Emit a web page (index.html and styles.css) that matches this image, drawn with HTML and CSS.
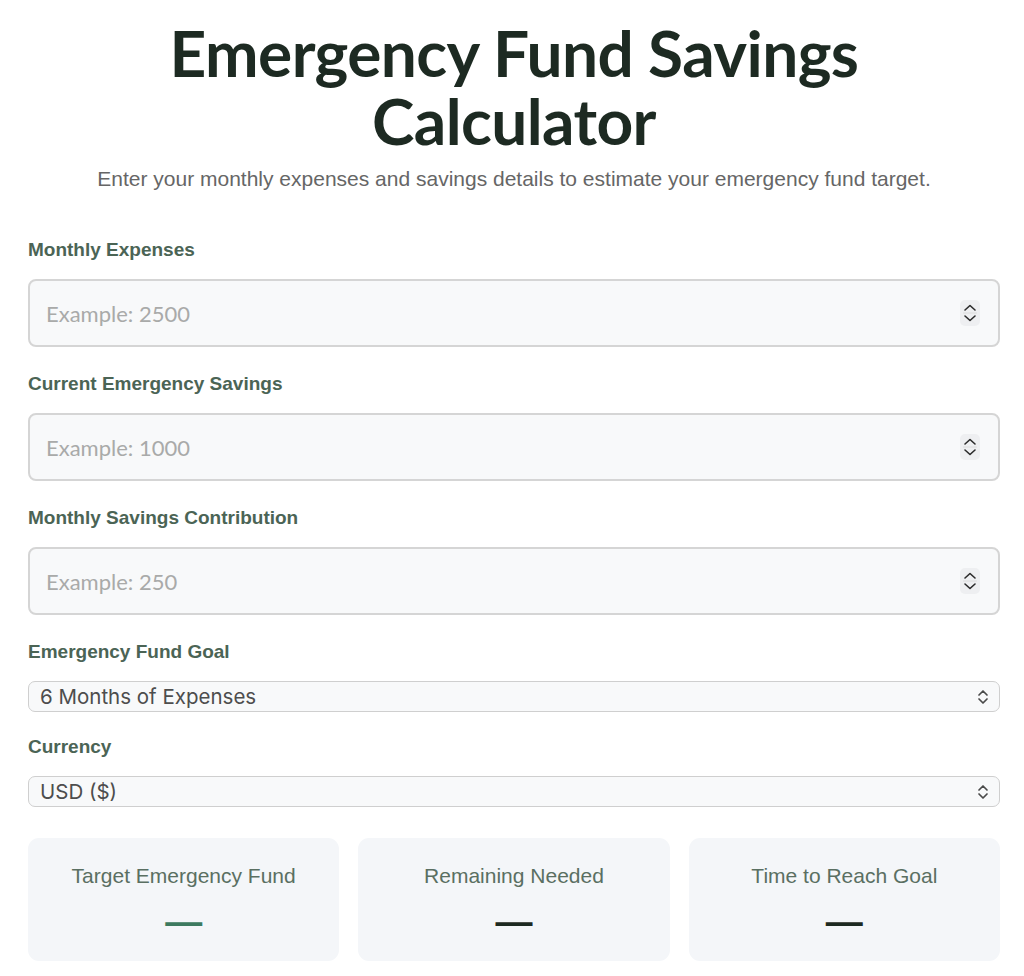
FILE: index.html
```html
<!DOCTYPE html>
<html lang="en">
<head>
    <meta charset="UTF-8">
    <meta name="viewport" content="width=device-width, initial-scale=1.0">
    <title>Emergency Fund Savings Calculator</title>
    <link rel="stylesheet" href="styles.css">
</head>
<body>
    <div class="calculator">
        <h1 class="title">Emergency Fund Savings Calculator</h1>
        <p class="subtitle">Enter your monthly expenses and savings details to estimate your emergency fund target.</p>

        <div class="field">
            <label class="field-label" for="expenses">Monthly Expenses</label>
            <div class="number-box">
                <input class="number-input" type="text" id="expenses" placeholder="Example: 2500">
                <span class="stepper">
                    <svg width="20" height="26" viewBox="0 0 20 26"><path d="M5 10l5-4.5 5 4.5M5 16l5 4.5 5-4.5" fill="none" stroke="#2b2b2b" stroke-width="1.6" stroke-linecap="round" stroke-linejoin="round"/><path d="M3 13h14" stroke="#dcdcdc" stroke-width="1"/></svg>
                </span>
            </div>
        </div>

        <div class="field">
            <label class="field-label" for="savings">Current Emergency Savings</label>
            <div class="number-box">
                <input class="number-input" type="text" id="savings" placeholder="Example: 1000">
                <span class="stepper">
                    <svg width="20" height="26" viewBox="0 0 20 26"><path d="M5 10l5-4.5 5 4.5M5 16l5 4.5 5-4.5" fill="none" stroke="#2b2b2b" stroke-width="1.6" stroke-linecap="round" stroke-linejoin="round"/><path d="M3 13h14" stroke="#dcdcdc" stroke-width="1"/></svg>
                </span>
            </div>
        </div>

        <div class="field">
            <label class="field-label" for="contribution">Monthly Savings Contribution</label>
            <div class="number-box">
                <input class="number-input" type="text" id="contribution" placeholder="Example: 250">
                <span class="stepper">
                    <svg width="20" height="26" viewBox="0 0 20 26"><path d="M5 10l5-4.5 5 4.5M5 16l5 4.5 5-4.5" fill="none" stroke="#2b2b2b" stroke-width="1.6" stroke-linecap="round" stroke-linejoin="round"/><path d="M3 13h14" stroke="#dcdcdc" stroke-width="1"/></svg>
                </span>
            </div>
        </div>

        <div class="field field-select">
            <label class="field-label" for="goal">Emergency Fund Goal</label>
            <div class="select-box">
                <select class="select-input" id="goal">
                    <option>3 Months of Expenses</option>
                    <option selected>6 Months of Expenses</option>
                    <option>9 Months of Expenses</option>
                    <option>12 Months of Expenses</option>
                </select>
                <svg class="select-arrows" width="12" height="20" viewBox="0 0 12 20"><path d="M2 8l4-4 4 4M2 12l4 4 4-4" fill="none" stroke="#4a4a4a" stroke-width="1.7" stroke-linecap="round" stroke-linejoin="round"/></svg>
            </div>
        </div>

        <div class="field field-select">
            <label class="field-label" for="currency">Currency</label>
            <div class="select-box">
                <select class="select-input" id="currency">
                    <option selected>USD ($)</option>
                    <option>EUR (€)</option>
                    <option>GBP (£)</option>
                </select>
                <svg class="select-arrows" width="12" height="20" viewBox="0 0 12 20"><path d="M2 8l4-4 4 4M2 12l4 4 4-4" fill="none" stroke="#4a4a4a" stroke-width="1.7" stroke-linecap="round" stroke-linejoin="round"/></svg>
            </div>
        </div>

        <div class="results">
            <div class="result-card">
                <div class="result-label">Target Emergency Fund</div>
                <div class="result-value result-value-main">—</div>
            </div>
            <div class="result-card">
                <div class="result-label">Remaining Needed</div>
                <div class="result-value">—</div>
            </div>
            <div class="result-card">
                <div class="result-label">Time to Reach Goal</div>
                <div class="result-value">—</div>
            </div>
        </div>
    </div>
</body>
</html>
```

FILE: styles.css
```css
body {
    margin: 0;
    font-family: "Liberation Sans", Arial, sans-serif;
    background: #ffffff;
    color: #1d2a22;
}

.calculator {
    padding: 19px 24px 16px 28px;
}

.title {
    font-family: Lato, "Liberation Sans", sans-serif;
    font-weight: 700;
    font-size: 64px;
    line-height: 68px;
    letter-spacing: -0.6px;
    text-align: center;
    color: #1d2a22;
    margin: 0;
}

.subtitle {
    font-size: 21px;
    line-height: 24px;
    color: #666666;
    text-align: center;
    margin: 12px 0 48px;
}

.field {
    margin-bottom: 26px;
}

.field-label {
    display: block;
    font-size: 19px;
    line-height: 22px;
    font-weight: 700;
    color: #4b6455;
    margin-bottom: 18px;
}

/* number fields: text input plus a stepper in one bordered box */
.number-box {
    display: flex;
    align-items: center;
    height: 68px;
    box-sizing: border-box;
    border: 2px solid #d5d5d5;
    border-radius: 8px;
    background: #f8f9fa;
    padding: 0 18px 0 16px;
}

.number-input {
    flex: 1;
    border: none;
    outline: none;
    background: transparent;
    font-family: Lato, "Liberation Sans", sans-serif;
    font-size: 22px;
    color: #333333;
    padding: 0;
}

.number-input::placeholder {
    color: #a9aaa9;
}

.stepper {
    display: flex;
    width: 20px;
    height: 26px;
    border-radius: 5px;
    background: #eeeff1;
}

.field-select {
    margin-bottom: 24px;
}

.select-box {
    display: flex;
    align-items: center;
    height: 31px;
    box-sizing: border-box;
    border: 1.5px solid #cfcfcf;
    border-radius: 7px;
    background: #f8f9fa;
    padding: 0 10px 0 0;
}

.select-input {
    flex: 1;
    appearance: none;
    -webkit-appearance: none;
    border: none;
    outline: none;
    background: transparent;
    font-family: Inter, "Liberation Sans", sans-serif;
    font-size: 20.5px;
    color: #4d4d4d;
    padding: 0 0 0 11px;
    height: 100%;
}

.results {
    display: grid;
    grid-template-columns: repeat(3, 1fr);
    gap: 19px;
    margin-top: 31px;
}

.result-card {
    background: #f4f6f9;
    border-radius: 11px;
    height: 123px;
    box-sizing: border-box;
    padding-top: 26px;
    text-align: center;
}

.result-label {
    font-size: 21px;
    line-height: 24px;
    color: #5a6f62;
}

.result-value {
    font-size: 37px;
    font-weight: 700;
    line-height: 40px;
    margin-top: 14px;
    color: #1d2a22;
}

.result-value-main {
    color: #3d7a60;
}
```
